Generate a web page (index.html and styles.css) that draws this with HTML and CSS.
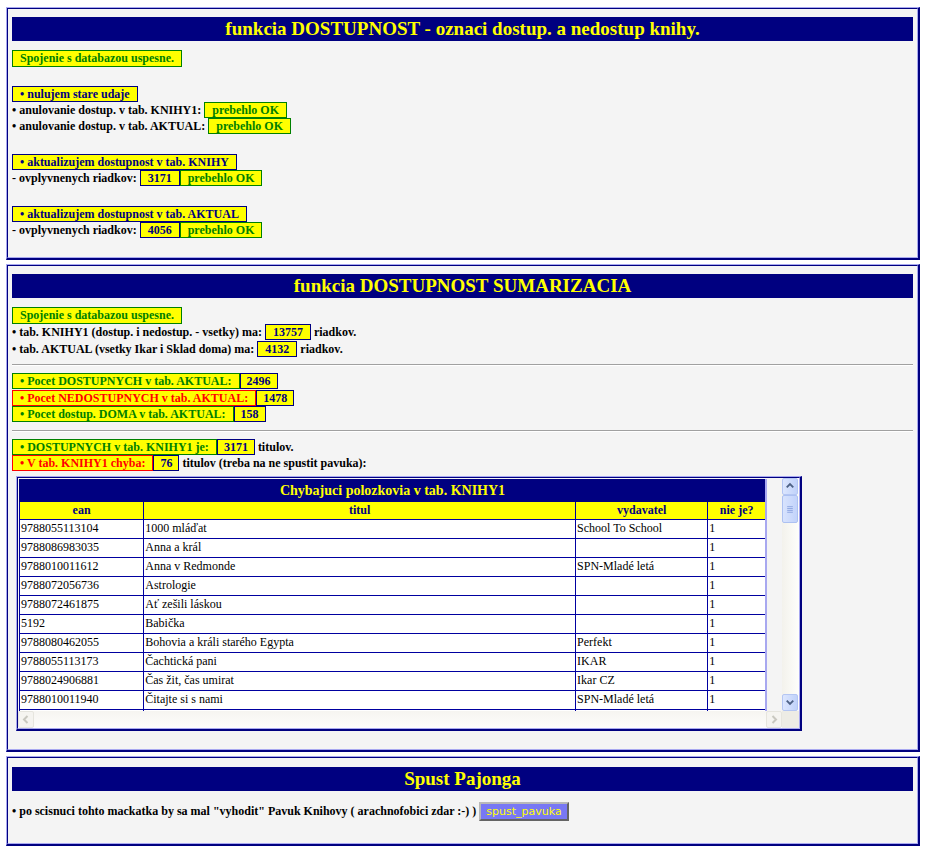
FILE: index.html
```html
<!DOCTYPE html>
<html>
<head>
<meta charset="utf-8">
<title>DOSTUPNOST</title>
<link rel="stylesheet" href="styles.css">
</head>
<body>
<div class="page">

  <div class="panel">
    <div class="panel-in p1">
      <div class="title">funkcia DOSTUPNOST - oznaci dostup. a nedostup knihy.</div>
      <div class="group g-status"><span class="box ok">Spojenie s databazou uspesne.</span></div>
      <div class="group g-a">
        <div class="line"><span class="box nv">• nulujem stare udaje</span></div>
        <div class="line">• anulovanie dostup. v tab. KNIHY1: <span class="box ok">prebehlo OK</span></div>
        <div class="line">• anulovanie dostup. v tab. AKTUAL: <span class="box ok">prebehlo OK</span></div>
      </div>
      <div class="group g-b">
        <div class="line"><span class="box nv">• aktualizujem dostupnost v tab. KNIHY</span></div>
        <div class="line">- ovplyvnenych riadkov: <span class="box nv">3171</span><span class="box ok">prebehlo OK</span></div>
      </div>
      <div class="group g-b">
        <div class="line"><span class="box nv">• aktualizujem dostupnost v tab. AKTUAL</span></div>
        <div class="line">- ovplyvnenych riadkov: <span class="box nv">4056</span><span class="box ok">prebehlo OK</span></div>
      </div>
    </div>
  </div>

  <div class="panel">
    <div class="panel-in p2">
      <div class="title">funkcia DOSTUPNOST SUMARIZACIA</div>
      <div class="group g-status"><span class="box ok">Spojenie s databazou uspesne.</span></div>
      <div class="line l2">• tab. KNIHY1 (dostup. i nedostup. - vsetky) ma: <span class="box nv">13757</span> riadkov.</div>
      <div class="line l2">• tab. AKTUAL (vsetky Ikar i Sklad doma) ma: <span class="box nv">4132</span> riadkov.</div>
      <hr class="sep">
      <div class="line l2"><span class="box ok">• Pocet DOSTUPNYCH v tab. AKTUAL:</span><span class="box nv num">2496</span></div>
      <div class="line l2"><span class="box err">• Pocet NEDOSTUPNYCH v tab. AKTUAL:</span><span class="box nv num">1478</span></div>
      <div class="line l2"><span class="box ok">• Pocet dostup. DOMA v tab. AKTUAL:</span><span class="box nv num">158</span></div>
      <hr class="sep">
      <div class="line l2"><span class="box ok">• DOSTUPNYCH v tab. KNIHY1 je:</span><span class="box nv num">3171</span> titulov.</div>
      <div class="line l2"><span class="box err">• V tab. KNIHY1 chyba:</span><span class="box nv num">76</span> titulov (treba na ne spustit pavuka):</div>

      <div class="scroll">
        <div class="scroll-in">
          <div class="view">
            <table class="grid">
              <colgroup>
                <col class="c-ean"><col class="c-titul"><col class="c-vyd"><col class="c-nie">
              </colgroup>
              <tr class="caption-row"><td colspan="4">Chybajuci polozkovia v tab. KNIHY1</td></tr>
              <tr class="head-row"><th>ean</th><th>titul</th><th>vydavatel</th><th>nie je?</th></tr>
              <tr><td>9788055113104</td><td>1000 mláďat</td><td>School To School</td><td>1</td></tr>
              <tr><td>9788086983035</td><td>Anna a král</td><td></td><td>1</td></tr>
              <tr><td>9788010011612</td><td>Anna v Redmonde</td><td>SPN-Mladé letá</td><td>1</td></tr>
              <tr><td>9788072056736</td><td>Astrologie</td><td></td><td>1</td></tr>
              <tr><td>9788072461875</td><td>Ať zešili láskou</td><td></td><td>1</td></tr>
              <tr><td>5192</td><td>Babička</td><td></td><td>1</td></tr>
              <tr><td>9788080462055</td><td>Bohovia a králi starého Egypta</td><td>Perfekt</td><td>1</td></tr>
              <tr><td>9788055113173</td><td>Čachtická pani</td><td>IKAR</td><td>1</td></tr>
              <tr><td>9788024906881</td><td>Čas žit, čas umirat</td><td>Ikar CZ</td><td>1</td></tr>
              <tr><td>9788010011940</td><td>Čitajte si s nami</td><td>SPN-Mladé letá</td><td>1</td></tr>
              <tr class="cut"><td></td><td></td><td></td><td></td></tr>
            </table>
          </div>
          <div class="vbar">
            <div class="sbtn on">
              <svg width="15" height="14" viewBox="0 0 15 14"><path d="M4 8.5 L7.5 5 L11 8.5" fill="none" stroke="#4d6185" stroke-width="2"/></svg>
            </div>
            <div class="thumb">
              <svg width="15" height="26" viewBox="0 0 15 26"><path d="M4.5 10.5h6M4.5 12.5h6M4.5 14.5h6M4.5 16.5h6" stroke="#8ca5e0" stroke-width="1"/></svg>
            </div>
            <div class="track"></div>
            <div class="sbtn on">
              <svg width="15" height="14" viewBox="0 0 15 14"><path d="M4 5.5 L7.5 9 L11 5.5" fill="none" stroke="#4d6185" stroke-width="2"/></svg>
            </div>
          </div>
          <div class="hbar">
            <div class="hbtn">
              <svg width="14" height="15" viewBox="0 0 14 15"><path d="M8.5 4 L5 7.5 L8.5 11" fill="none" stroke="#c9c8c0" stroke-width="2"/></svg>
            </div>
            <div class="htrack"></div>
            <div class="hbtn">
              <svg width="14" height="15" viewBox="0 0 14 15"><path d="M5.5 4 L9 7.5 L5.5 11" fill="none" stroke="#c9c8c0" stroke-width="2"/></svg>
            </div>
          </div>
          <div class="corner"></div>
        </div>
      </div>
    </div>
  </div>

  <div class="panel">
    <div class="panel-in p3">
      <div class="title">Spust Pajonga</div>
      <div class="line l3">• po scisnuci tohto mackatka by sa mal "vyhodit" Pavuk Knihovy ( arachnofobici zdar :-) ) <button class="btn" type="button">spust_pavuka</button></div>
    </div>
  </div>

</div>
</body>
</html>
```

FILE: styles.css
```css
* {
  box-sizing: border-box;
}

body {
  margin: 7px 6px 0;
  background: #ffffff;
  font-family: "Liberation Serif", "Times New Roman", serif;
  font-size: 12px;
  font-weight: bold;
  color: #000000;
}

.page {
  display: flex;
  flex-direction: column;
  gap: 4px;
}

.panel {
  border-style: solid;
  border-width: 1px 2px 2px 1px;
  border-color: #a8a8f0 #000080 #000080 #a8a8f0;
}

.panel-in {
  border: 1px solid;
  border-color: #000080 #a8a8f0 #a8a8f0 #000080;
  background: #f4f4f4;
  padding: 8px 4px 19px 4px;
}

.p2 {
  padding-top: 8px;
  padding-bottom: 18px;
}

.p3 {
  padding-top: 9px;
  padding-bottom: 22px;
}

.title {
  background: #000080;
  color: #ffff00;
  font-size: 19px;
  height: 24px;
  line-height: 24px;
  text-align: center;
}

.group {
  display: flex;
  flex-direction: column;
  align-items: flex-start;
}

.g-status {
  margin-top: 9px;
  height: 17px;
}

.g-status .box {
  height: 17px;
  line-height: 15px;
}

.g-a {
  margin-top: 19px;
}

.g-b {
  margin-top: 20px;
}

.line {
  height: 16px;
  line-height: 16px;
  white-space: nowrap;
}

.l2 {
  height: 16.5px;
}

.l3 {
  margin-top: 11px;
  height: 19px;
  line-height: 19px;
}

.box {
  display: inline-block;
  vertical-align: top;
  height: 16px;
  line-height: 14px;
  border: 1px solid;
  padding: 0 7px;
  background: #ffff00;
}

.num {
  padding: 0 6px;
}

.ok {
  border-color: #008000;
  color: #008000;
}

.nv {
  border-color: #000080;
  color: #000080;
}

.err {
  border-color: #ff0000;
  color: #ff0000;
}

.sep {
  margin: 7px 0 7px;
  border: 0;
  border-top: 1px solid #a0a0a0;
  border-bottom: 1px solid #ffffff;
  height: 0;
}

/* scroll box */
.scroll {
  margin: 4px 0 0 4px;
  width: 786px;
  height: 255px;
  border-style: solid;
  border-width: 1px 2px 2px 1px;
  border-color: #a8a8f0 #000080 #000080 #a8a8f0;
}

.scroll-in {
  height: 100%;
  border: 1px solid;
  border-color: #000080 #a8a8f0 #a8a8f0 #000080;
  display: grid;
  grid-template-columns: 1fr 17px;
  grid-template-rows: 1fr 17px;
  background: #f4f4f4;
}

.view {
  overflow: hidden;
  padding: 1px 0 0 1px;
}

.grid {
  table-layout: fixed;
  width: 748px;
  border-collapse: collapse;
  border-style: solid;
  border-width: 2px 2px 0 1px;
  border-color: #000080 #a8a8f0 #000080 #000080;
  background: #ffffff;
  font-size: 12px;
}

.c-ean { width: 124px; }
.c-titul { width: 431px; }
.c-vyd { width: 132px; }
.c-nie { width: 58px; }

.grid td,
.grid th {
  border: 1px solid #0000a0;
  height: 19px;
  line-height: 17px;
  padding: 0 1px;
  white-space: nowrap;
  overflow: hidden;
  text-align: left;
  font-weight: normal;
  color: #000000;
  vertical-align: middle;
}

.grid .caption-row td {
  background: #000080;
  color: #ffff00;
  font-weight: bold;
  font-size: 14px;
  text-align: center;
  height: 21px;
  line-height: 20px;
  border-color: #000080;
}

.grid .head-row th {
  background: #ffff00;
  color: #000080;
  font-weight: bold;
  text-align: center;
  height: 18px;
  line-height: 16px;
}

/* scrollbars */
.vbar {
  display: flex;
  flex-direction: column;
  background: linear-gradient(to right, #f3f2ec, #fefefb);
}

.sbtn {
  height: 17px;
  display: flex;
  align-items: center;
  justify-content: center;
}

.sbtn.on {
  margin: 0 1px 0 0;
  border: 1px solid #b4c6f3;
  border-radius: 2px;
  background: linear-gradient(to right, #dce6fe, #c0d2fa);
}

.thumb {
  height: 28px;
  margin: 0 1px 0 0;
  border: 1px solid #adc1f1;
  border-radius: 2px;
  background: linear-gradient(to right, #d8e3fd, #c2d3fb);
  display: flex;
  align-items: center;
  justify-content: center;
}

.track {
  flex: 1;
}

.hbar {
  display: flex;
  background: linear-gradient(#f6f5f1, #fdfdfb);
}

.hbtn {
  width: 16px;
  border: 1px solid #e6e5de;
  border-radius: 2px;
  background: #f5f4f0;
  display: flex;
  align-items: center;
  justify-content: center;
}

.htrack {
  flex: 1;
}

.corner {
  background: #edece5;
}

.btn {
  font-family: "DejaVu Sans", Verdana, sans-serif;
  font-size: 11px;
  font-weight: normal;
  color: #ffff00;
  background: #7878f4;
  border: 2px outset #b8b8b8;
  height: 19px;
  padding: 0 5px;
  margin: 0;
  vertical-align: top;
  line-height: 13px;
}
```
